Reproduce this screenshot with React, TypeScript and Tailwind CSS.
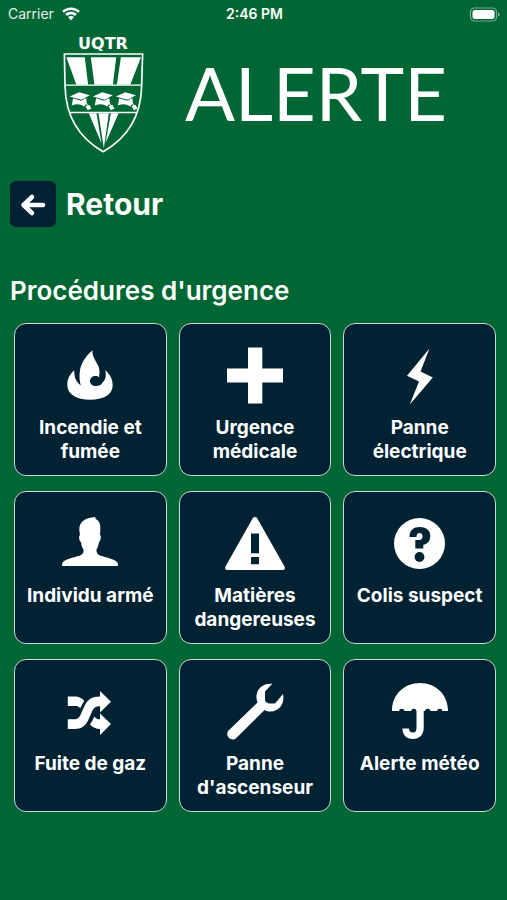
import type { ReactNode } from "react";

interface Procedure {
  id: string;
  label: string;
  icon: ReactNode;
}

const procedures: Procedure[] = [
  { id: "fire", label: "Incendie et fumée", icon: <FireIcon /> },
  { id: "medical", label: "Urgence médicale", icon: <CrossIcon /> },
  { id: "power", label: "Panne électrique", icon: <BoltIcon /> },
  { id: "armed", label: "Individu armé", icon: <PersonIcon /> },
  { id: "hazmat", label: "Matières dangereuses", icon: <WarningIcon /> },
  { id: "package", label: "Colis suspect", icon: <QuestionIcon /> },
  { id: "gas", label: "Fuite de gaz", icon: <ShuffleIcon /> },
  { id: "elevator", label: "Panne d'ascenseur", icon: <WrenchIcon /> },
  { id: "weather", label: "Alerte météo", icon: <UmbrellaIcon /> },
];

export default function App() {
  return (
    <div className="min-h-screen bg-[#006633] font-['Inter','Liberation_Sans',sans-serif] text-white">
      <StatusBar />

      <header className="flex items-start pt-2 pl-[63px]">
        <div className="flex w-20 flex-col items-center">
          <span className="font-['DejaVu_Sans',sans-serif] text-base leading-4 font-bold">UQTR</span>
          <ShieldLogo />
        </div>
        <h1 className="mt-5 ml-[42px] font-['Lato',sans-serif] text-[74px] leading-[74px]">ALERTE</h1>
      </header>

      <main className="pt-7 pb-20">
        <button type="button" className="ml-2.5 flex items-center gap-2.5">
          <span className="flex size-[46px] items-center justify-center rounded-md bg-[#002233]">
            <BackIcon />
          </span>
          <span className="text-[30px] leading-9 font-bold">Retour</span>
        </button>

        <h2 className="mt-12 ml-2.5 text-[26px] leading-8 font-semibold">Procédures d'urgence</h2>

        <div className="mt-4 grid grid-cols-3 gap-x-3 gap-y-[15px] pr-[11px] pl-3.5">
          {procedures.map((procedure) => (
            <ProcedureCard key={procedure.id} procedure={procedure} />
          ))}
        </div>
      </main>
    </div>
  );
}

function StatusBar() {
  return (
    <div className="grid h-7 grid-cols-3 items-center pr-1.5 pl-2 text-sm">
      <div className="flex items-center gap-2">
        <span className="text-white/90">Carrier</span>
        <svg className="h-3.5 w-[18px]" viewBox="0 0 18 14" fill="currentColor" aria-hidden>
          <path d="M9 0.4c3.4 0 6.500 1.300 8.800 3.500l-1.700 1.900C14.200 4 11.700 3 9 3S3.800 4 1.900 5.800L0.200 3.900C2.500 1.700 5.600 0.400 9 0.400Z" />
          <path d="M9 4.700c2.200 0 4.200 0.800 5.800 2.300l-1.800 2C11.900 8 10.500 7.400 9 7.400S6.100 8 5 9L3.200 7C4.800 5.500 6.800 4.700 9 4.700Z" />
          <path d="M9 9c1.100 0 2.100 0.400 2.900 1.100L9 13.600 6.100 10.100C6.900 9.400 7.900 9 9 9Z" />
        </svg>
      </div>
      <span className="text-center font-semibold">2:46 PM</span>
      <svg className="h-[15px] w-8 justify-self-end" viewBox="0 0 32 15" aria-hidden>
        <rect x="1.500" y="1" width="26" height="13" rx="4" fill="none" stroke="#fff" strokeOpacity="0.45" strokeWidth="1.200" />
        <rect x="3.500" y="3" width="22" height="9" rx="2.200" fill="#fff" />
        <path d="M29 5.500c1.300 0.500 1.800 1.200 1.800 2s-0.500 1.500-1.800 2Z" fill="#fff" fillOpacity="0.5" />
      </svg>
    </div>
  );
}

function ProcedureCard({ procedure }: { procedure: Procedure }) {
  return (
    <button
      type="button"
      className="flex h-[153px] flex-col items-center rounded-xl border border-[#c9dad8] bg-[#002233] px-2 pt-5"
    >
      {procedure.icon}
      <span className="mt-2 text-[19px] leading-6 font-bold">{procedure.label}</span>
    </button>
  );
}

function CardIcon({ children }: { children: ReactNode }) {
  return (
    <svg className="size-16 shrink-0" viewBox="0 0 64 64" fill="currentColor" aria-hidden>
      {children}
    </svg>
  );
}

function ShieldLogo() {
  return (
    <svg className="h-[101px] w-[81px]" viewBox="40 62 242 302" fill="#fff" role="img" aria-label="UQTR">
      <path
        d="M44 68H278L275 165C273 250 239 315 160 360C81 315 48 250 46 165Z"
        fill="none"
        stroke="#fff"
        strokeWidth="5"
      />
      <path d="M50 78H105L115 160H80ZM123 78H199L189 160H134ZM213 78H273L241 160H201Z" />
      <path d="M46 161H275M61 243H259" stroke="#fff" strokeWidth="4" />
      <path d="M117 245H140L155 335ZM146 245H177L162 350ZM183 245H206L167 335Z" />
      <GradCap x={60} />
      <GradCap x={129} />
      <GradCap x={198} />
    </svg>
  );
}

function GradCap({ x }: { x: number }) {
  return (
    <g transform={`translate(${x} 182)`}>
      <path d="M0 13 28 0 60 9 35 23Z" />
      <path d="M10 18 33 26 50 18V34L43 43C30 35 20 35 6 40Z" />
      <path d="M43 19 54 42" fill="none" stroke="#fff" strokeWidth="3" />
      <path d="M47 42 58 38 65 49 54 54Z" />
    </g>
  );
}

function BackIcon() {
  return (
    <svg className="size-7" viewBox="0 0 28 28" fill="none" aria-hidden>
      <path
        d="M13 7 4.500 15 13 23M5 15H24"
        stroke="#fff"
        strokeWidth="4.500"
        strokeLinecap="round"
        strokeLinejoin="round"
      />
    </svg>
  );
}

function FireIcon() {
  return (
    <CardIcon>
      <path d="M34.500 6.200C33.500 15 41.500 19 41.500 27.500C41.500 30 41.200 31.500 41.200 33.300C38 30.500 32 32 32 37C32 43.500 42.500 43.500 44.500 38.500C48.500 35 48 30.500 47.300 26.200C52 30 54.800 35.500 54.700 41.200C54.500 51 45 55.700 32 55.700C18.500 55.700 9.300 50.500 9.300 40.800C9.300 34.500 12 30 16.300 26.200C16 33 18 37.500 22.800 41.600C21.500 37 21.200 32.500 21.800 27.500C23 17.500 29 11 34.500 6.200Z" />
    </CardIcon>
  );
}

function CrossIcon() {
  return (
    <CardIcon>
      <path d="M25 3.500H39.300V24.500H60V38.500H39.300V59.500H25V38.500H4V24.500H25Z" />
    </CardIcon>
  );
}

function BoltIcon() {
  return (
    <CardIcon>
      <path d="M41.500 4.500 32.500 27.500 44.800 33.500 21.800 60.500 31 37.500 19 31.800Z" />
    </CardIcon>
  );
}

function PersonIcon() {
  return (
    <CardIcon>
      <path d="M37 5 37.800 7C41 8.500 42.800 12 42.300 18L42 23C43.500 24 42.800 29 41 30C40.500 33.500 39.700 35.500 38.500 37.500C38.200 40.500 39.500 42.800 42.500 43.800C48 45.500 55 46.500 59 50Q60 51 60 54H4Q4 51 5 50C9 46.500 16 45.500 21.500 43.800C24.500 42.800 26 40.500 25.500 37.500C24.200 35.500 23.300 33 23 30C21 29 20.500 24 22 23L21.300 18C21 9.500 27 6 37 5Z" />
    </CardIcon>
  );
}

function WarningIcon() {
  return (
    <CardIcon>
      <path
        fillRule="evenodd"
        d="M31.900 5Q33.500 5 34.200 6.300L61.500 54.500Q62.700 58 60 58H4Q1.300 58 2.500 54.500L29.700 6.300Q30.500 5 31.900 5ZM28 21.500V41.300H36V21.500ZM28 45V52.300H36V45Z"
      />
    </CardIcon>
  );
}

function QuestionIcon() {
  return (
    <CardIcon>
      <circle cx="31.500" cy="31.500" r="25.500" />
      <path
        d="M27.300 36.500V28H31C33 28 34.500 27 34.500 24.500C34.500 22 33.500 21 31.500 21C29.500 21 28.500 22.300 28.500 25H21.500C21.500 18 25.500 15 32 15C38.500 15 42.300 18.500 42.300 24C42.300 29 39.500 32 35.300 32.800V36.500Z"
        fill="#002233"
      />
      <circle cx="31.500" cy="45" r="4.900" fill="#002233" />
    </CardIcon>
  );
}

function ShuffleIcon() {
  return (
    <CardIcon>
      <path d="M9.800 16.500H17C21 16.500 24 18 26.300 21C24.500 23.500 23.500 26 22.300 28.300C20.800 26.500 19.500 26 17 26H9.800Z" />
      <path d="M9.800 39.300H16C20 39.300 21.800 37 23.300 33L26.500 26C29.500 19.500 34 16.500 42 16.500V11L53 21.700L42 32.500V26.300C37.500 26.300 35.500 28 33.800 32L30.500 39.500C27.500 46 23.500 49 16.500 49H9.800Z" />
      <path d="M36.300 36.500C37.800 38.500 39.500 39.300 42 39.300V33.500L53 44L42 55V49C38 48.800 34.700 47.500 32 44.500C33.800 42 35 39.500 36.300 36.500Z" />
    </CardIcon>
  );
}

function WrenchIcon() {
  return (
    <CardIcon>
      <path d="M49.300 3.800 42 11.500V20L43 22.300 46 23.500H52L60 14C61.500 21.500 58.500 27.500 53.500 30C49.500 32 45 32 41.500 30L13 58.200C8.500 62 1.500 56 5.300 50.800L34.500 22.500C30.500 12 38 2.500 49.300 3.800Z" />
    </CardIcon>
  );
}

function UmbrellaIcon() {
  return (
    <CardIcon>
      <path d="M4 31C4 14 16.500 3 32 3S60 14 60 31H54.500A2.800 2.800 0 0 0 49 31H42.500A2.800 2.800 0 0 0 37 31H35.700V48C35.700 55 31 59 25 59C18.500 59 14.500 55 14.500 49V48.500H21V49C21 51 22.500 52.500 25 52.500C27.300 52.500 28.500 51 28.500 48V31A2.800 2.800 0 0 0 23 31H16.500A2.800 2.800 0 0 0 11 31Z" />
    </CardIcon>
  );
}
